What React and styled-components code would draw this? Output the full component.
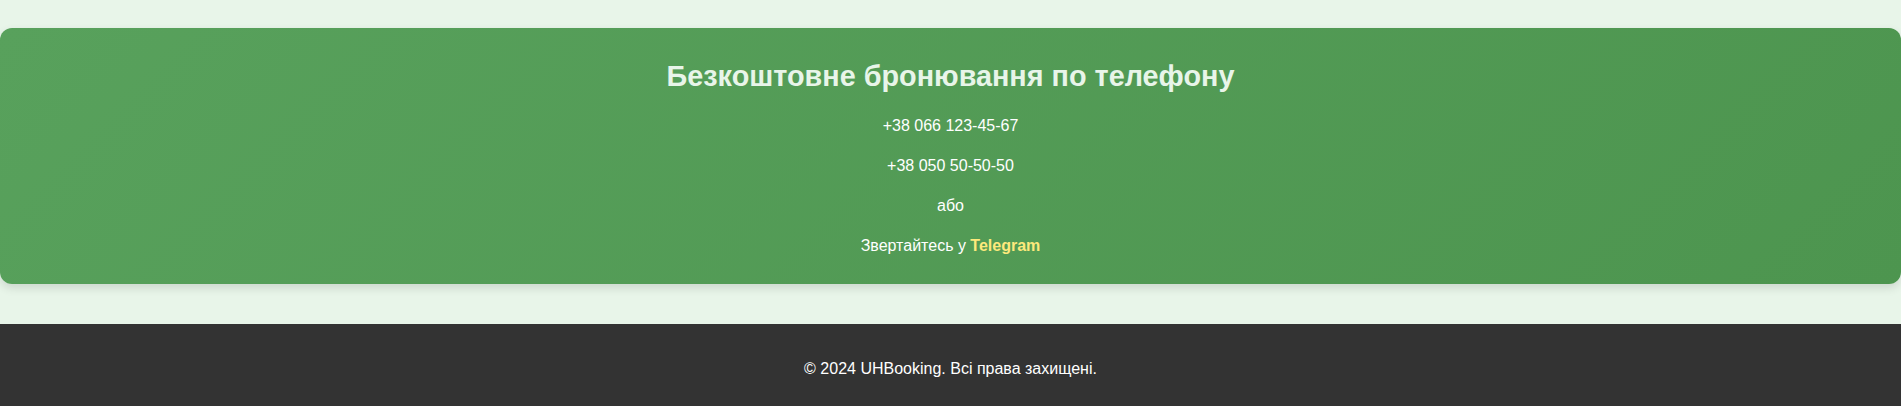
import React from "react";
import { styled, createGlobalStyle } from "styled-components";

const GlobalStyle = createGlobalStyle`
  body {
    margin: 0;
    background-color: #e8f5e9;
    font-family: "Liberation Sans", Arial, sans-serif;
  }
`;

const phones = ["+38 066 123-45-67", "+38 050 50-50-50"];

const App = () => {
  return (
    <>
      <GlobalStyle />
      <Page>
        <ContactSection>
          <ContactTitle>Безкоштовне бронювання по телефону</ContactTitle>
          <ContactList>
            {phones.map((phone) => (
              <ContactLine key={phone}>{phone}</ContactLine>
            ))}
            <ContactLine>або</ContactLine>
            <ContactLine>
              Звертайтесь у <TelegramLink href="#">Telegram</TelegramLink>
            </ContactLine>
          </ContactList>
        </ContactSection>
        <Footer>
          <FooterText>© 2024 UHBooking. Всі права захищені.</FooterText>
        </Footer>
      </Page>
    </>
  );
};

export default App;

const Page = styled.div`
  padding-top: 28px;
`;

const ContactSection = styled.section`
  margin: 0 0 40px;
  padding: 32px 20px 26px;
  border-radius: 12px;
  background: linear-gradient(135deg, #58a15c 0%, #4d954f 100%);
  box-shadow: 0 4px 10px rgba(0, 0, 0, 0.12);
  text-align: center;
  color: #ffffff;
`;

const ContactTitle = styled.h2`
  margin: 0 0 21px;
  font-size: 28.8px;
  font-weight: bold;
  line-height: normal;
  color: #e8f5e9;
`;

const ContactList = styled.div`
  display: flex;
  flex-direction: column;
  gap: 16px;
`;

const ContactLine = styled.p`
  margin: 0;
  font-size: 16px;
  line-height: 24px;
`;

const TelegramLink = styled.a`
  color: #fde97c;
  font-weight: bold;
  text-decoration: none;
`;

const Footer = styled.footer`
  background-color: #333333;
  color: #ffffff;
  padding: 20px;
  text-align: center;
`;

const FooterText = styled.p`
  margin: 16px 0;
  font-size: 16px;
`;
